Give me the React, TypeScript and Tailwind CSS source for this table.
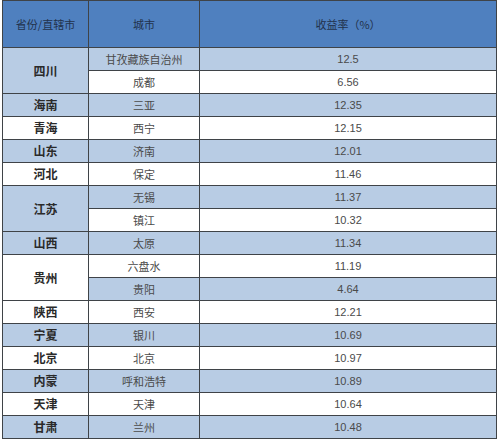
import React from 'react';

type Row = { province?: string; span?: number; city: string; rate: string };

const rows: Row[] = [
  { province: '四川', span: 2, city: '甘孜藏族自治州', rate: '12.5' },
  { city: '成都', rate: '6.56' },
  { province: '海南', city: '三亚', rate: '12.35' },
  { province: '青海', city: '西宁', rate: '12.15' },
  { province: '山东', city: '济南', rate: '12.01' },
  { province: '河北', city: '保定', rate: '11.46' },
  { province: '江苏', span: 2, city: '无锡', rate: '11.37' },
  { city: '镇江', rate: '10.32' },
  { province: '山西', city: '太原', rate: '11.34' },
  { province: '贵州', span: 2, city: '六盘水', rate: '11.19' },
  { city: '贵阳', rate: '4.64' },
  { province: '陕西', city: '西安', rate: '12.21' },
  { province: '宁夏', city: '银川', rate: '10.69' },
  { province: '北京', city: '北京', rate: '10.97' },
  { province: '内蒙', city: '呼和浩特', rate: '10.89' },
  { province: '天津', city: '天津', rate: '10.64' },
  { province: '甘肃', city: '兰州', rate: '10.48' },
];

const cell = 'border border-[#3f4347] text-center align-middle p-0';

export default function App() {
  return (
    <div className="w-[500px] h-[440px] bg-white overflow-hidden pl-[2px] pr-[3px] font-['Noto_Sans_CJK_SC','Noto_Sans',sans-serif] text-[11px]">
      <table className="w-full border-collapse table-fixed">
        <colgroup>
          <col className="w-[86px]" />
          <col className="w-[111px]" />
          <col />
        </colgroup>
        <thead>
          <tr className="h-[47px] bg-[#4f80bf] text-[#22324c]">
            <th className={`${cell} font-normal`}>省份/直辖市</th>
            <th className={`${cell} font-normal`}>城市</th>
            <th className={`${cell} font-normal`}>收益率（%）</th>
          </tr>
        </thead>
        <tbody>
          {rows.map((r, i) => {
            const bg = i % 2 === 0 ? 'bg-[#b8cce4]' : 'bg-white';
            return (
              <tr key={i} className={`h-[23px] ${bg}`}>
                {r.province && (
                  <td rowSpan={r.span} className={`${cell} font-bold text-[12px] text-[#2a2a2a]`}>
                    {r.province}
                  </td>
                )}
                <td className={`${cell} text-[#4a4a4a]`}>{r.city}</td>
                <td className={`${cell} text-[#4a4a4a] font-['Liberation_Sans',sans-serif]`}>{r.rate}</td>
              </tr>
            );
          })}
        </tbody>
      </table>
    </div>
  );
}
